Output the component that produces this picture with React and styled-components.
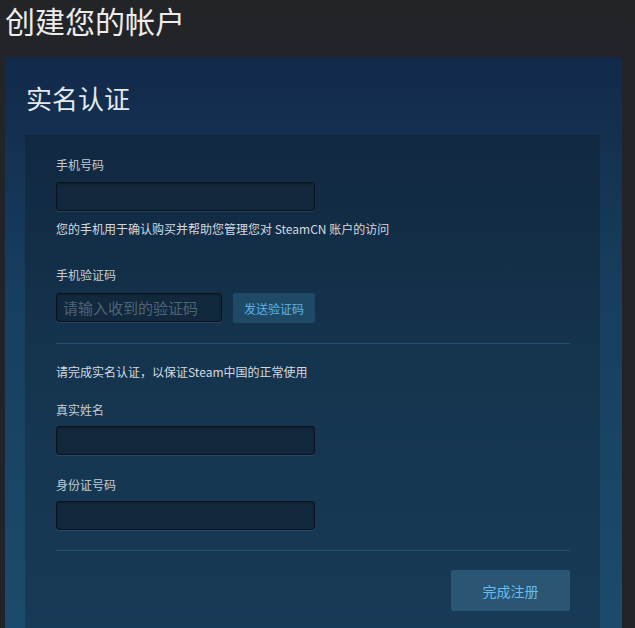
import React from 'react';
import styled, { createGlobalStyle } from 'styled-components';

const GlobalStyle = createGlobalStyle`
  html, body {
    margin: 0;
    padding: 0;
    background: #222428;
    font-family: 'Noto Sans CJK SC', 'Noto Sans', sans-serif;
    overflow: hidden;
  }
`;

const Page = styled.div`
  width: 635px;
  height: 628px;
  overflow: hidden;
  background: linear-gradient(180deg, #222428 0%, #212328 100%);
`;

const Title = styled.h1`
  margin: 0;
  padding: 1px 0 0 5px;
  height: 57px;
  box-sizing: border-box;
  font-size: 30px;
  line-height: 38px;
  font-weight: 400;
  color: #ececec;
`;

const Outer = styled.div`
  margin-left: 5px;
  width: 617px;
  height: 571px;
  padding: 0 22px 0 20px;
  box-sizing: border-box;
  background: linear-gradient(180deg, #12294a 0%, #173e5e 40%, #1b4b6c 100%);
`;

const Heading = styled.h2`
  margin: 0;
  padding: 24px 0 0 1px;
  height: 78px;
  box-sizing: border-box;
  font-size: 26px;
  line-height: 34px;
  font-weight: 400;
  color: #e3e8ec;
`;

const Inner = styled.div`
  padding: 22px 30px 0 31px;
  background: linear-gradient(180deg, #112840 0%, #15354f 50%, #173a56 100%);
  height: 493px;
  box-sizing: border-box;
`;

const Label = styled.div`
  font-size: 12px;
  line-height: 16px;
  color: #c4ccd3;
  margin-top: ${(p) => p.$top || 0}px;
`;

const Note = styled(Label)`
  color: #d2dae0;
`;

const Input = styled.input`
  display: block;
  width: ${(p) => p.$w || 259}px;
  height: 29px;
  margin-top: ${(p) => p.$top || 0}px;
  box-sizing: border-box;
  padding: 0 6px;
  border: 1px solid #08131f;
  border-radius: 3px;
  background: #12283c;
  box-shadow: 0 1px 0 rgba(120, 160, 190, 0.18), inset 0 1px 2px rgba(0, 0, 0, 0.25);
  color: #d0d8de;
  font-family: inherit;
  font-size: 15px;
  outline: none;
  &::placeholder {
    color: #4c6478;
  }
`;

const Row = styled.div`
  display: flex;
  gap: 11px;
  align-items: flex-start;
  margin-top: 10px;
`;

const SmallButton = styled.button`
  width: 82px;
  height: 30px;
  border: none;
  border-radius: 2px;
  background: #1f4a67;
  color: #5cb3e6;
  font-family: inherit;
  font-size: 12px;
  padding: 0;
  cursor: pointer;
`;

const Divider = styled.div`
  height: 1px;
  background: #24506d;
  margin-top: ${(p) => p.$top || 20}px;
`;

const Footer = styled.div`
  display: flex;
  justify-content: flex-end;
  margin-top: 19px;
`;

const SubmitButton = styled.button`
  width: 119px;
  height: 41px;
  border: none;
  border-radius: 2px;
  background: #2a5673;
  color: #66bdf0;
  font-family: inherit;
  font-size: 14px;
  padding: 0;
  cursor: pointer;
`;

export default function App() {
  return (
    <Page>
      <GlobalStyle />
      <Title>创建您的帐户</Title>
      <Outer>
        <Heading>实名认证</Heading>
        <Inner>
          <Label>手机号码</Label>
          <Input $top={9} />
          <Note $top={10}>您的手机用于确认购买并帮助您管理您对 SteamCN 账户的访问</Note>
          <Label $top={30}>手机验证码</Label>
          <Row>
            <Input $w={166} placeholder="请输入收到的验证码" />
            <SmallButton>发送验证码</SmallButton>
          </Row>
          <Divider $top={20} />
          <Note $top={20}>请完成实名认证，以保证Steam中国的正常使用</Note>
          <Label $top={22}>真实姓名</Label>
          <Input $top={8} />
          <Label $top={22}>身份证号码</Label>
          <Input $top={8} />
          <Divider $top={20} />
          <Footer>
            <SubmitButton>完成注册</SubmitButton>
          </Footer>
        </Inner>
      </Outer>
    </Page>
  );
}
